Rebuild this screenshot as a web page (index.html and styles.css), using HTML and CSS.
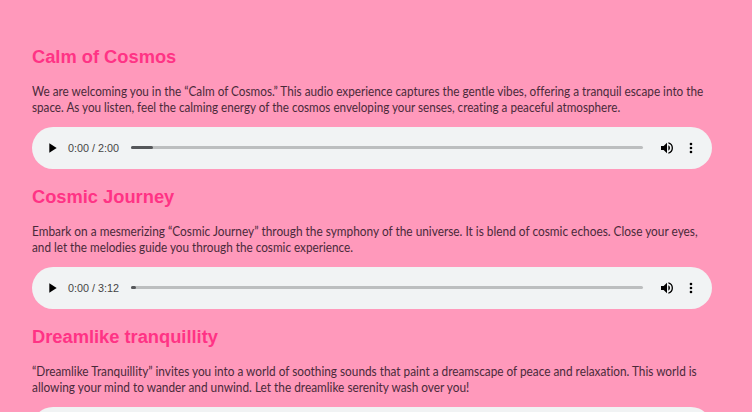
FILE: index.html
```html
<!DOCTYPE html>
<html lang="en">
<head>
<meta charset="utf-8">
<title>Cosmic Audio</title>
<link rel="stylesheet" href="styles.css">
</head>
<body>
<svg class="sprite" aria-hidden="true">
  <symbol id="play" viewBox="0 0 24 24"><path d="M8 5v14l11-7z"/></symbol>
  <symbol id="volume" viewBox="0 0 24 24"><path d="M3 9v6h4l5 5V4L7 9H3zm13.5 3A4.5 4.5 0 0 0 14 7.97v8.05A4.5 4.5 0 0 0 16.500 12zM14 3.230v2.060a7 7 0 0 1 0 13.420v2.060a9 9 0 0 0 0-17.540z"/></symbol>
  <symbol id="more" viewBox="0 0 24 24"><path d="M12 8a2 2 0 1 0 0-4 2 2 0 0 0 0 4zm0 2a2 2 0 1 0 0 4 2 2 0 0 0 0-4zm0 6a2 2 0 1 0 0 4 2 2 0 0 0 0-4z"/></symbol>
</svg>
<main class="tracks">
  <section class="track">
    <h2>Calm of Cosmos</h2>
    <p><span class="line a1">We are welcoming you in the “Calm of Cosmos.” This audio experience captures the gentle vibes, offering a tranquil escape into the</span>
    <span class="line a2">space. As you listen, feel the calming energy of the cosmos enveloping your senses, creating a peaceful atmosphere.</span></p>
    <div class="player">
      <svg class="play"><use href="#play"/></svg><span class="time">0:00 / 2:00</span>
      <div class="bar"><div class="loaded calm"></div></div>
      <svg class="volume"><use href="#volume"/></svg><svg class="more"><use href="#more"/></svg>
    </div>
  </section>
  <section class="track">
    <h2>Cosmic Journey</h2>
    <p><span class="line b1">Embark on a mesmerizing “Cosmic Journey” through the symphony of the universe. It is blend of cosmic echoes. Close your eyes,</span>
    <span class="line b2">and let the melodies guide you through the cosmic experience.</span></p>
    <div class="player">
      <svg class="play"><use href="#play"/></svg><span class="time">0:00 / 3:12</span>
      <div class="bar"><div class="loaded journey"></div></div>
      <svg class="volume"><use href="#volume"/></svg><svg class="more"><use href="#more"/></svg>
    </div>
  </section>
  <section class="track last">
    <h2>Dreamlike tranquillity</h2>
    <p><span class="line c1">“Dreamlike Tranquillity” invites you into a world of soothing sounds that paint a dreamscape of peace and relaxation. This world is</span>
    <span class="line c2">allowing your mind to wander and unwind. Let the dreamlike serenity wash over you!</span></p>
    <div class="player"></div>
  </section>
</main>
</body>
</html>
```
FILE: styles.css
```css
* { box-sizing: border-box; }
body {
  margin: 0;
  height: 412px;
  overflow: hidden;
  background: #ff99bb;
}
.sprite { display: none; }
.tracks { height: 412px; overflow: hidden; padding: 45px 40.5px 0 32px; }
.track { height: 140px; }
h2 {
  margin: 0;
  height: 37.5px;
  font: bold 18.3px/23px "Liberation Sans", Arial, sans-serif;
  color: #ff3385;
}
p {
  margin: 0 0 12.500px;
  height: 32px;
  font: 13px/16px Lato, sans-serif;
  font-variant-ligatures: none;
  color: #4a2a3a;
}
.line {
  display: block;
  width: max-content;
  white-space: nowrap;
  transform: scaleX(0.9);
  transform-origin: 0 0;
}
.a1 { transform: scaleX(0.904); }
.a2 { transform: scaleX(0.898); }
.b1 { transform: scaleX(0.912); }
.b2 { transform: scaleX(0.903); }
.c1 { transform: scaleX(0.908); }
.c2 { transform: scaleX(0.911); }
.player {
  display: flex;
  align-items: center;
  height: 41.5px;
  border-radius: 21px;
  background: #f1f3f4;
}
.player svg { flex: none; width: 16px; height: 16px; }
.play { margin-left: 12px; }
.time {
  width: 63px;
  margin-left: 8px;
  font: 10.8px/16px "Liberation Sans", Arial, sans-serif;
  color: #444;
}
.bar {
  flex: 1;
  height: 3px;
  border-radius: 2px;
  background: #bcbebf;
}
.loaded { height: 3px; border-radius: 2px; background: #55575a; }
.calm { width: 22px; }
.journey { width: 5px; }
.volume { margin-left: 16px; }
.more { margin: 0 12.500px 0 8px; }
```
